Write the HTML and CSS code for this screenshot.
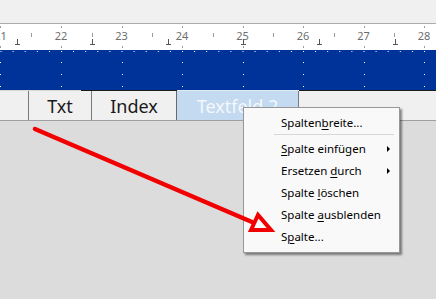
FILE: index.html
```html
<!DOCTYPE html>
<html lang="de">
<head>
<meta charset="utf-8">
<link rel="stylesheet" href="styles.css">
</head>
<body>
<div class="page">
  <div class="topbar"></div>
  <svg class="ruler" width="436" height="26" viewBox="0 24 436 26">
    <g class="nums">
      <text x="0.5" y="40">21</text>
      <text x="61" y="40">22</text>
      <text x="121.5" y="40">23</text>
      <text x="182" y="40">24</text>
      <text x="242.5" y="40">25</text>
      <text x="303" y="40">26</text>
      <text x="363.5" y="40">27</text>
      <text x="424" y="40">28</text>
    </g>
    <g class="ticks">
      <path d="M0.5 26v2M61.5 26v2M122.5 26v2M182.5 26v2M243.5 26v2M303.5 26v2M364.5 26v2M424.5 26v2"/>
      <path d="M0.5 46v2M61.5 46v2M122.5 46v2M182.5 46v2M243.5 46v2M303.5 46v2M364.5 46v2M424.5 46v2"/>
      <path d="M31.5 33v4M92.5 33v4M152.5 33v4M213.5 33v4M273.5 33v4M334.5 33v4M394.5 33v4"/>
    </g>
    <g class="stops">
      <path d="M17.5 39v6M15 44.5h5M92.5 39v6M90 44.5h5M168.5 39v6M166 44.5h5M243.5 39v6M241 44.5h5M319.5 39v6M317 44.5h5M395.5 39v6M393 44.5h5"/>
    </g>
  </svg>
  <svg class="band" width="436" height="40" viewBox="0 50 436 40">
    <defs>
      <pattern id="row" x="0.5" y="0" width="12.1" height="100" patternUnits="userSpaceOnUse">
        <rect x="0" y="51" width="1" height="1" fill="#fff"/>
      </pattern>
    </defs>
    <rect x="0" y="50" width="436" height="40" fill="#003399"/>
    <rect x="0" y="50" width="436" height="4" fill="url(#row)"/>
    <g class="dots">
      <path d="M0.5 62v1M0.5 74v1M0.5 86v1M61.5 62v1M61.5 74v1M61.5 86v1M122.5 62v1M122.5 74v1M122.5 86v1M182.5 62v1M182.5 74v1M182.5 86v1M243.5 62v1M243.5 74v1M243.5 86v1M303.5 62v1M303.5 74v1M303.5 86v1M364.5 62v1M364.5 74v1M364.5 86v1M424.5 62v1M424.5 74v1M424.5 86v1"/>
    </g>
  </svg>
  <div class="tabbar">
    <div class="tab-lead"></div>
    <div class="tab">Txt</div>
    <div class="tab tab-index">Index</div>
    <div class="tab tab-active">Textfeld 2</div>
  </div>
  <div class="workspace"></div>

  <div class="menu">
    <div class="item">Spalten<u>b</u>reite...</div>
    <div class="sep"></div>
    <div class="item sub"><u>S</u>palte einfügen</div>
    <div class="item sub">Ersetzen <u>d</u>urch</div>
    <div class="item">Spalte <u>l</u>öschen</div>
    <div class="item">Spalte <u>a</u>usblenden</div>
    <div class="item">S<u>p</u>alte...</div>
  </div>

  <svg class="arrow" width="436" height="299" viewBox="0 0 436 299">
    <line x1="35" y1="129" x2="252" y2="222"/>
    <polygon points="251,230 258,215 271,230"/>
  </svg>
</div>
</body>
</html>
```

FILE: styles.css
```css
html, body {
  margin: 0;
  padding: 0;
}
body {
  width: 436px;
  height: 299px;
  overflow: hidden;
  background: #dcdcdc;
  font-family: "Noto Sans", "Open Sans", "DejaVu Sans", sans-serif;
}
.page {
  position: relative;
  width: 436px;
  height: 299px;
  display: flex;
  flex-direction: column;
}
.topbar {
  height: 23px;
  background: #f0f0f0;
  border-bottom: 1px solid #acacac;
  flex: none;
}
.ruler {
  display: block;
  background: #fff;
  flex: none;
}
.ruler .nums text {
  font-family: "Noto Sans", "Open Sans", sans-serif;
  font-size: 11px;
  fill: #6e6e6e;
  text-anchor: middle;
}
.ruler .ticks path {
  stroke: #9a9a9a;
  stroke-width: 1;
  fill: none;
}
.ruler .stops path {
  stroke: #555;
  stroke-width: 1;
  fill: none;
}
.band {
  display: block;
  flex: none;
}
.band .dots path {
  stroke: #fff;
  stroke-width: 1;
}
.tabbar {
  flex: none;
  height: 29px;
  display: flex;
  background-color: #f0f0f0;
  background-image: linear-gradient(to right, #d8d8d8 0, #d8d8d8 81px, #1c1c1c 81px, #1c1c1c 177px, #dfe9f3 177px, #dfe9f3 299px, #1c1c1c 299px);
  background-size: 100% 1px;
  background-repeat: no-repeat;
  border-bottom: 1px solid #a0a0a0;
  padding-top: 1px;
}
.tab-lead {
  width: 28px;
  border-right: 1px solid #7a7a7a;
}
.tab {
  font-size: 18px;
  color: #1a1a1a;
  display: flex;
  align-items: center;
  justify-content: center;
  width: 63px;
  border-right: 1px solid #7a7a7a;
  padding-top: 1px;
  box-sizing: border-box;
}
.tab-index {
  width: 85px;
  border-right: 1px solid #6a6a6a;
}
.tab-active {
  width: 122px;
  background: #c3daf0;
  color: #f4f8fc;
  border-right: 1px solid #7a7a7a;
}
.workspace {
  flex: 1;
  background: #dcdcdc;
}
.arrow {
  position: absolute;
  left: 0;
  top: 0;
  pointer-events: none;
}
.arrow line {
  stroke: #f20000;
  stroke-width: 4.5;
  stroke-linecap: round;
}
.arrow polygon {
  fill: none;
  stroke: #f20000;
  stroke-width: 4;
  stroke-linejoin: miter;
}
.menu {
  position: absolute;
  left: 243px;
  top: 107px;
  width: 155px;
  height: 140px;
  background: #f9f9f9;
  border: 1px solid #979797;
  box-shadow: 2px 2px 2px rgba(0, 0, 0, 0.45);
  padding-top: 4px;
  box-sizing: content-box;
}
.item {
  position: relative;
  height: 22px;
  line-height: 22px;
  font-size: 11.5px;
  color: #000;
  padding-left: 37px;
  white-space: nowrap;
}
.item u {
  text-decoration-thickness: 1px;
  text-underline-offset: 2px;
}
.sub::after {
  content: "";
  position: absolute;
  left: 143px;
  top: 8px;
  border-left: 3px solid #000;
  border-top: 3px solid transparent;
  border-bottom: 3px solid transparent;
}
.sep {
  height: 1px;
  background: #d7d7d7;
  margin: 0 5px 3px 30px;
}
```
